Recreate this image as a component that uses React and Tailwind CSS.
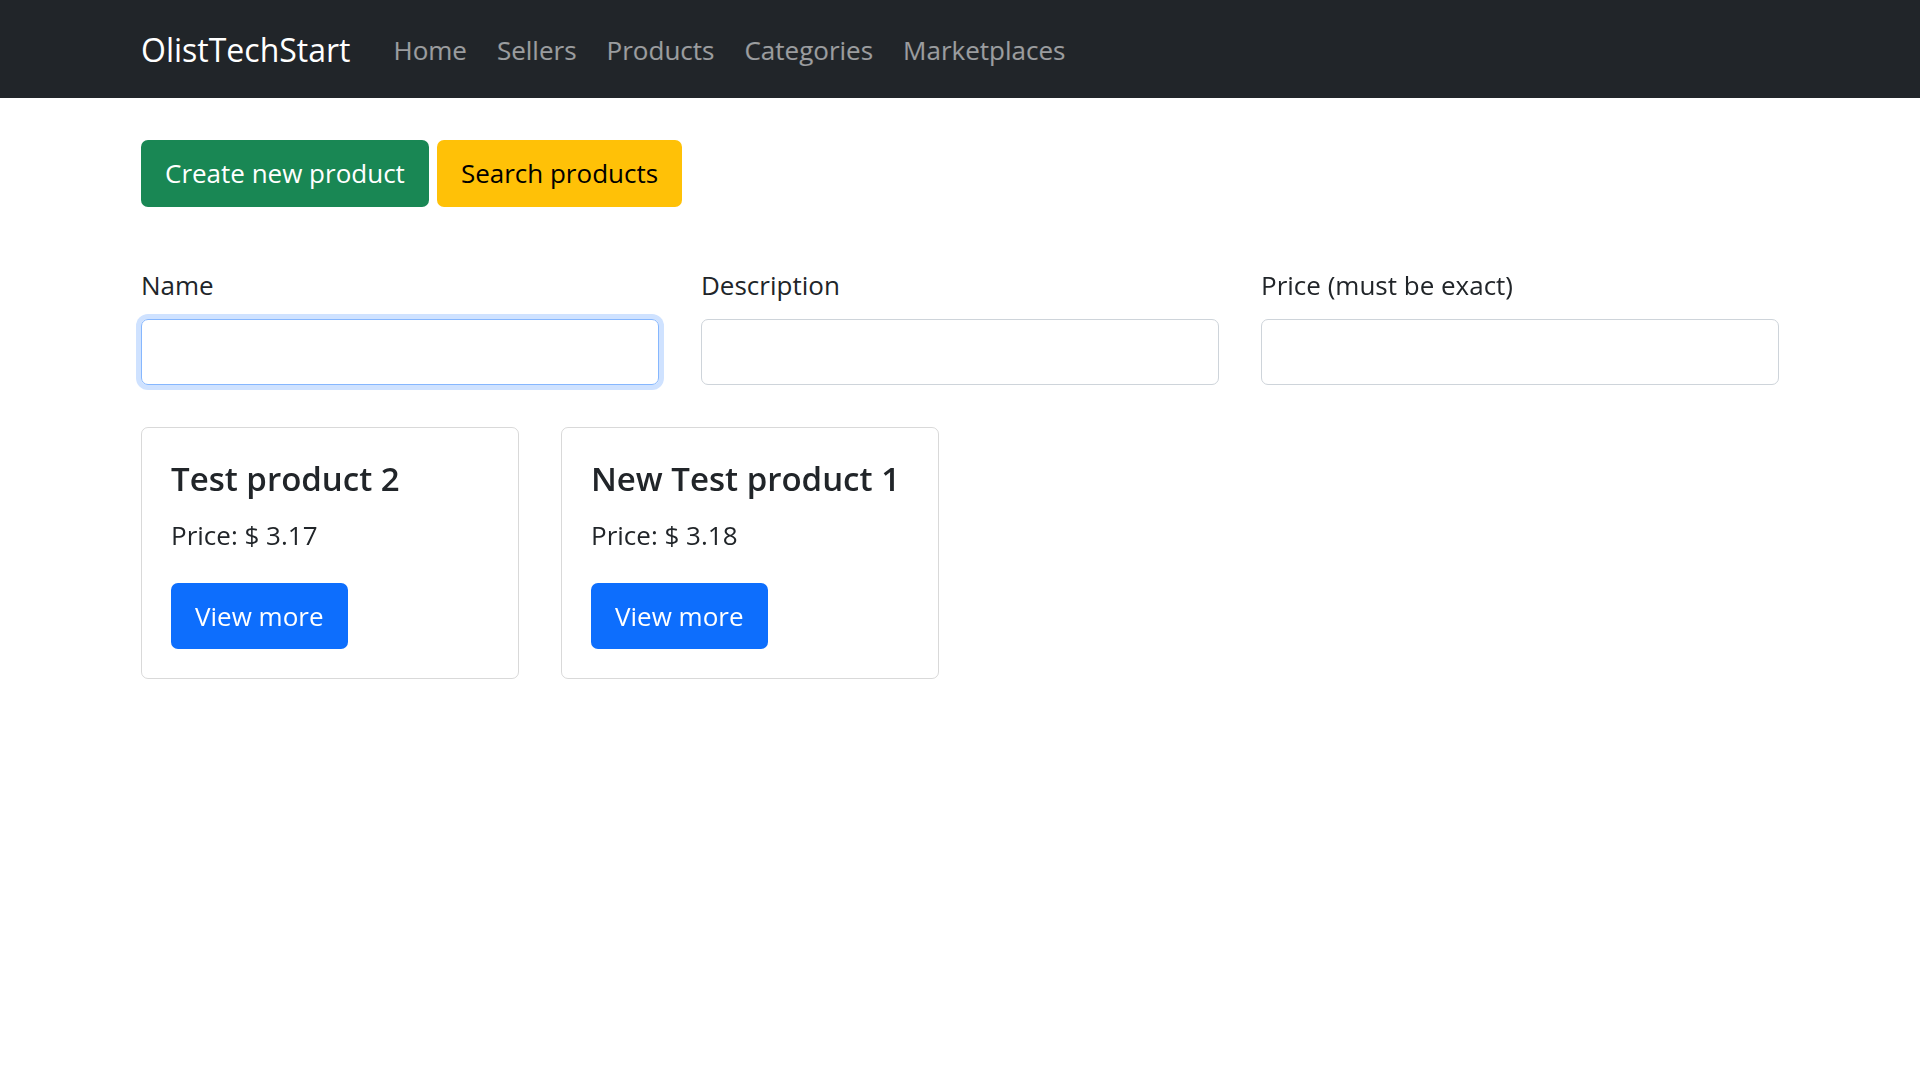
const font = 'font-["Segoe_UI","Open_Sans",sans-serif]';

const links = ["Home", "Sellers", "Products", "Categories", "Marketplaces"];
const fields = [
  { id: "name", label: "Name" },
  { id: "description", label: "Description" },
  { id: "price", label: "Price (must be exact)" },
];
const products = [
  { name: "Test product 2", price: "3.17" },
  { name: "New Test product 1", price: "3.18" },
];

export default function App() {
  return (
    <div className={`${font} text-[26px] leading-[44px] text-[#212529]`}>
      <nav className="bg-[#212529] pt-[15px] pb-[13px]">
        <div className="mx-auto flex max-w-[1680px] items-center px-[21px]">
          <a href="#" className="mr-7 py-2 text-[32px] leading-[54px] text-white">OlistTechStart</a>
          <div className="flex">
            {links.map((l) => (
              <a key={l} href="#" className="px-[15px] py-3 text-white/55">{l}</a>
            ))}
          </div>
        </div>
      </nav>
      <main className="mx-auto max-w-[1680px] px-[21px] pt-[42px]">
        <div className="flex gap-2">
          <button type="button" className="rounded-[7px] bg-[#198754] px-6 py-[11px] leading-[45px] text-white">Create new product</button>
          <button type="button" className="rounded-[7px] bg-[#ffc107] px-6 py-[11px] leading-[45px] text-black">Search products</button>
        </div>
        <form className="mt-14 grid grid-cols-3 gap-[42px]">
          {fields.map((f, i) => (
            <div key={f.id}>
              <label htmlFor={f.id} className="mb-3 block">{f.label}</label>
              <input id={f.id} type="text" autoFocus={i === 0} className="block h-[66px] w-full rounded-[7px] border border-[#ced4da] px-5 caret-transparent outline-none focus:border-[#86b7fe] focus:ring-[5px] focus:ring-[#0d6efd]/20" />
            </div>
          ))}
        </form>
        <div className="mt-[42px] grid grid-cols-4 gap-[42px]">
          {products.map((p) => (
            <article key={p.name} className="rounded-[7px] border border-black/15 p-[29px]">
              <h5 className="mb-3 text-[33px] leading-[44px] font-semibold">{p.name}</h5>
              <p className="mb-[26px]">Price: $ {p.price}</p>
              <button type="button" className="rounded-[7px] bg-[#0d6efd] px-6 py-[11px] text-white">View more</button>
            </article>
          ))}
        </div>
      </main>
    </div>
  );
}
